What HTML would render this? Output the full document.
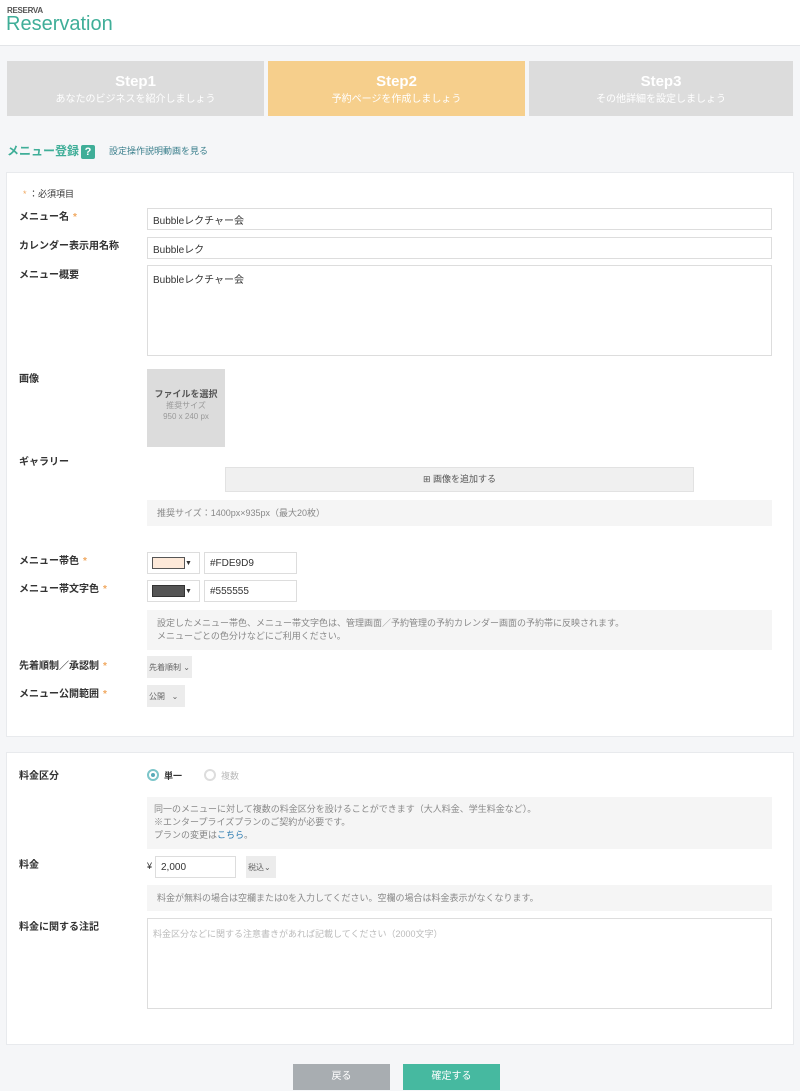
<!DOCTYPE html>
<html><head><meta charset="utf-8"><style>
*{box-sizing:border-box;margin:0;padding:0}
body{width:800px;height:1091px;background:#f5f6f8;font-family:"Liberation Sans","Noto Sans CJK JP",sans-serif;font-size:10px;color:#333;position:relative;overflow:hidden}
.a{position:absolute}
.hdr{left:0;top:0;width:800px;height:46px;background:#fff;border-bottom:1px solid #e3e5e8}
.step{top:61px;height:55px;text-align:center;color:#fff}
.step b{display:block;font-size:15px;margin-top:12px;line-height:18px}
.step span{display:block;font-size:10px;margin-top:3px;line-height:12px}
.card{background:#fff;border:1px solid #e8eaed;left:6px;width:788px}
.lbl{left:19px;font-weight:bold;font-size:10px;color:#333;line-height:12px}
.req{color:#f0a860;margin-left:4px}
.inp{background:#fff;border:1px solid #ddd;padding-left:5px;font-size:10px;color:#333;display:flex;align-items:center}
.note{background:#f5f5f5;color:#888;font-size:9px;line-height:13px;padding:7px 10px}
.sel{background:#ececec;font-size:8px;color:#666;padding-left:2px;display:flex;align-items:center;white-space:nowrap;overflow:hidden}
</style></head><body>
<div class="a hdr"></div>
<div class="a" style="left:7px;top:6px;font-size:8px;line-height:10px;font-weight:bold;color:#555;letter-spacing:-0.3px">RESERVA</div>
<div class="a" style="left:6px;top:13px;font-size:20px;line-height:22px;color:#3fae98">Reservation</div>

<div class="a step" style="left:7px;width:257px;background:#dcdcdc"><b>Step1</b><span>あなたのビジネスを紹介しましょう</span></div>
<div class="a step" style="left:268px;width:257px;background:#f6cf8c"><b>Step2</b><span>予約ページを作成しましょう</span></div>
<div class="a step" style="left:529px;width:264px;background:#dcdcdc"><b>Step3</b><span>その他詳細を設定しましょう</span></div>

<div class="a" style="left:7px;top:144px;font-size:12px;line-height:15px;color:#3fae98;font-weight:bold">メニュー登録</div>
<div class="a" style="left:81px;top:145px;width:14px;height:14px;background:#3fae98;color:#fff;font-weight:bold;font-size:11px;text-align:center;line-height:14px;border-radius:2px">?</div>
<div class="a" style="left:109px;top:145px;font-size:9px;line-height:12px;color:#3a7f8c">設定操作説明動画を見る</div>

<div class="a card" style="top:172px;height:565px"></div>
<div class="a" style="left:23px;top:187px;font-size:9px"><span style="color:#f0a860">*</span> ：必須項目</div>

<div class="a lbl" style="top:212px">メニュー名<span class="req">*</span></div>
<div class="a inp" style="left:147px;top:208px;width:625px;height:22px">Bubbleレクチャー会</div>
<div class="a lbl" style="top:241px">カレンダー表示用名称</div>
<div class="a inp" style="left:147px;top:237px;width:625px;height:22px">Bubbleレク</div>
<div class="a lbl" style="top:270px">メニュー概要</div>
<div class="a inp" style="left:147px;top:265px;width:625px;height:91px;padding-top:8px;line-height:14px;align-items:flex-start">Bubbleレクチャー会</div>

<div class="a lbl" style="top:374px">画像</div>
<div class="a" style="left:147px;top:369px;width:78px;height:78px;background:#dcdcdc;text-align:center;color:#999;font-size:8px;line-height:11px;padding-top:20px"><b style="color:#555;font-size:9px">ファイルを選択</b><br>推奨サイズ<br>950 x 240 px</div>

<div class="a lbl" style="top:457px">ギャラリー</div>
<div class="a" style="left:225px;top:467px;width:469px;height:25px;background:#f0f0f0;border:1px solid #e2e2e2;text-align:center;line-height:23px;font-size:9px;color:#555">⊞ 画像を追加する</div>
<div class="a note" style="left:147px;top:500px;width:625px;height:26px">推奨サイズ：1400px×935px（最大20枚）</div>

<div class="a lbl" style="top:556px">メニュー帯色<span class="req">*</span></div>
<div class="a inp" style="left:147px;top:552px;width:53px;height:22px;padding:4px"><div style="width:33px;height:12px;background:#fde9d9;border:1px solid #555"></div><span style="font-size:7px"> ▼</span></div>
<div class="a inp" style="left:204px;top:552px;width:93px;height:22px">#FDE9D9</div>
<div class="a lbl" style="top:584px">メニュー帯文字色<span class="req">*</span></div>
<div class="a inp" style="left:147px;top:580px;width:53px;height:22px;padding:4px"><div style="width:33px;height:12px;background:#555;border:1px solid #333"></div><span style="font-size:7px"> ▼</span></div>
<div class="a inp" style="left:204px;top:580px;width:93px;height:22px">#555555</div>
<div class="a note" style="left:147px;top:610px;width:625px;height:40px">設定したメニュー帯色、メニュー帯文字色は、管理画面／予約管理の予約カレンダー画面の予約帯に反映されます。<br>メニューごとの色分けなどにご利用ください。</div>

<div class="a lbl" style="top:661px">先着順制／承認制<span class="req">*</span></div>
<div class="a sel" style="left:147px;top:656px;width:45px;height:22px">先着順制 ⌄</div>
<div class="a lbl" style="top:689px">メニュー公開範囲<span class="req">*</span></div>
<div class="a sel" style="left:147px;top:685px;width:38px;height:22px">公開 &nbsp;&nbsp;⌄</div>

<div class="a card" style="top:752px;height:293px"></div>
<div class="a lbl" style="top:771px">料金区分</div>
<div class="a" style="left:147px;top:769px;width:12px;height:12px;border:2px solid #7cc5c9;border-radius:50%"><div style="width:4px;height:4px;background:#5aaab8;border-radius:50%;margin:2px"></div></div>
<div class="a" style="left:164px;top:769px;font-size:9px;font-weight:bold">単一</div>
<div class="a" style="left:204px;top:769px;width:12px;height:12px;border:2px solid #ddd;border-radius:50%"></div>
<div class="a" style="left:221px;top:769px;font-size:9px;color:#bbb">複数</div>
<div class="a note" style="left:147px;top:797px;width:625px;height:52px;padding:6px 7px">同一のメニューに対して複数の料金区分を設けることができます（大人料金、学生料金など）。<br>※エンタープライズプランのご契約が必要です。<br>プランの変更は<span style="color:#2a7ab0">こちら</span>。</div>

<div class="a lbl" style="top:860px">料金</div>
<div class="a" style="left:147px;top:861px;font-size:9px">¥</div>
<div class="a inp" style="left:155px;top:856px;width:81px;height:22px">2,000</div>
<div class="a sel" style="left:246px;top:856px;width:30px;height:22px">税込⌄</div>
<div class="a note" style="left:147px;top:885px;width:625px;height:26px">料金が無料の場合は空欄または0を入力してください。空欄の場合は料金表示がなくなります。</div>
<div class="a lbl" style="top:922px">料金に関する注記</div>
<div class="a inp" style="left:147px;top:918px;width:625px;height:91px;color:#bbb;font-size:9px;line-height:14px;padding-top:8px;align-items:flex-start">料金区分などに関する注意書きがあれば記載してください（2000文字）</div>

<div class="a" style="left:293px;top:1064px;width:97px;height:26px;background:#a8adb1;color:#fff;text-align:center;line-height:26px;font-size:10px">戻る</div>
<div class="a" style="left:403px;top:1064px;width:97px;height:26px;background:#46b9a0;color:#fff;text-align:center;line-height:26px;font-size:10px">確定する</div>
</body></html>
